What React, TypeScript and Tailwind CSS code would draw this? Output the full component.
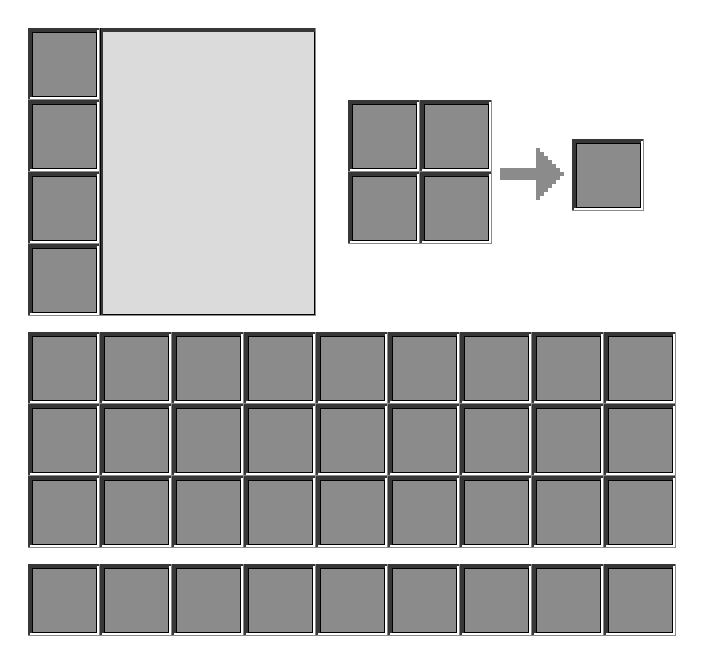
import React from "react";

function Slot() {
  return (
    <div className="w-[72px] h-[72px] bg-[#8b8b8b] pr-px pb-px flex shrink-0">
      <div className="flex-1 bg-[#373737] pl-[2px] pt-[2px] flex">
        <div className="flex-1 bg-white pr-[2px] pb-[2px] flex">
          <div className="flex-1 bg-[#373737] pl-[2px] pt-[2px] flex">
            <div className="flex-1 border border-black bg-[#8b8b8b]" />
          </div>
        </div>
      </div>
    </div>
  );
}

function Row() {
  return (
    <div className="flex">
      {Array.from({ length: 9 }).map((_, i) => (
        <Slot key={i} />
      ))}
    </div>
  );
}

function Arrow() {
  return (
    <svg width="64" height="52" viewBox="0 0 64 52" className="block" shapeRendering="crispEdges">
      <rect x="0" y="20" width="37" height="12" fill="#8b8b8b" />
      {[0, 1, 2, 3, 4, 5, 6].map((i) => (
        <rect key={i} x={36 + i * 4} y={i * 4} width="4" height={52 - i * 8} fill="#8b8b8b" />
      ))}
    </svg>
  );
}

export default function App() {
  return (
    <div className="w-[703px] h-[651px] bg-white pl-[28px] pt-[28px]">
      <div className="flex h-[288px]">
        <div className="flex flex-col">
          <Slot />
          <Slot />
          <Slot />
          <Slot />
        </div>
        <div className="w-[216px] h-[288px] bg-[#8b8b8b] pr-px pb-px flex">
          <div className="flex-1 bg-[#373737] border-l border-black pl-[2px] pt-[4px] flex">
            <div className="flex-1 bg-[#dbdbdb] border-r border-b border-black" />
          </div>
        </div>
        <div className="ml-[32px] mt-[72px] flex items-start">
          <div className="flex flex-col">
            <div className="flex">
              <Slot />
              <Slot />
            </div>
            <div className="flex">
              <Slot />
              <Slot />
            </div>
          </div>
          <div className="ml-[8px] mt-[48px]">
            <Arrow />
          </div>
          <div className="ml-[8px] mt-[39px]">
            <Slot />
          </div>
        </div>
      </div>
      <div className="mt-[16px] flex flex-col">
        <Row />
        <Row />
        <Row />
      </div>
      <div className="mt-[16px]">
        <Row />
      </div>
    </div>
  );
}
